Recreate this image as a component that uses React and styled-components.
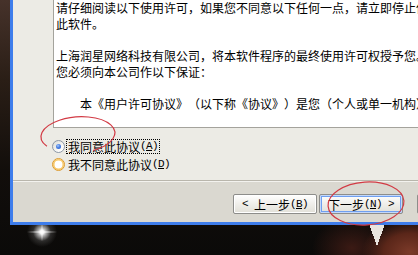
import React from "react";
import styled, { createGlobalStyle } from "styled-components";

const GlobalStyle = createGlobalStyle`
  html, body {
    margin: 0;
    padding: 0;
  }
  body {
    width: 418px;
    height: 255px;
    overflow: hidden;
    background: #0a0908;
  }
`;

const Scene = styled.div`
  position: relative;
  width: 418px;
  height: 255px;
  overflow: hidden;
  font-family: "Noto Sans CJK SC", "Noto Sans", sans-serif;
  text-spacing-trim: space-all;
  background:
    radial-gradient(ellipse 16px 1.5px at 42px 232px, rgba(255, 255, 255, 0.75), rgba(255, 255, 255, 0) 100%),
    radial-gradient(ellipse 1.5px 10px at 42px 232px, rgba(255, 255, 255, 0.7), rgba(255, 255, 255, 0) 100%),
    radial-gradient(circle at 42px 232px, #ffffff 0, #f2f2f2 2px, rgba(230, 230, 230, 0.75) 4px, rgba(140, 140, 140, 0.25) 9px, rgba(0, 0, 0, 0) 15px),
    conic-gradient(from -20deg at 377px 246px, #e9e4de 0 40deg, rgba(0, 0, 0, 0) 40deg),
    radial-gradient(ellipse 48px 34px at 410px 252px, #7b3a29 0, #5a2619 55%, rgba(40, 16, 12, 0) 100%),
    radial-gradient(ellipse 40px 30px at 352px 248px, #3b1a14 0, rgba(30, 14, 10, 0) 100%),
    linear-gradient(to bottom, #46322a 0, #2a1e16 80px, #120e0b 170px, #0b0a09 255px);
`;

const Window = styled.div`
  position: relative;
  z-index: 1;
  margin-left: 10px;
  width: 440px;
  height: 222px;
  border-left: 3px solid #3e7deb;
  border-bottom: 3px solid #3e7deb;
  display: flex;
  flex-direction: column;
`;

const Body = styled.div`
  height: 180px;
  background: #ecebe5;
  display: flex;
  flex-direction: column;
`;

const TextBox = styled.div`
  margin-left: 40px;
  width: 420px;
  height: 127px;
  box-sizing: content-box;
  padding: 14px 0 0 2px;
  margin-top: -14px;
  background: #ffffff;
  border-left: 1px solid #a4a39c;
  border-bottom: 1px solid #a4a39c;
  overflow: hidden;
`;

const TextLine = styled.div`
  height: 16px;
  line-height: 16px;
  font-size: 12px;
  color: #000;
  white-space: pre;
`;

const RadioGroup = styled.div`
  margin: 9px 0 0 39px;
  display: flex;
  flex-direction: column;
`;

const RadioRow = styled.div`
  height: 18px;
  display: flex;
  align-items: center;
`;

const RadioMark = styled.span`
  position: relative;
  box-sizing: border-box;
  width: 13px;
  height: 13px;
  border-radius: 50%;
  flex: none;
  border: 1px solid ${(p) => (p.$hover ? "#dc9a2c" : "#8c97a6")};
  background: ${(p) =>
    p.$hover ? "#ffffff" : "linear-gradient(135deg, #dcdcd4 0%, #ffffff 80%)"};
  box-shadow: ${(p) => (p.$hover ? "inset 0 0 0 1.5px #f8c866" : "none")};

  &::after {
    content: "";
    display: ${(p) => (p.$checked ? "block" : "none")};
    position: absolute;
    left: 3px;
    top: 3px;
    width: 5px;
    height: 5px;
    border-radius: 50%;
    background: radial-gradient(circle at 40% 35%, #a9c8fb 0, #4f86e6 40%, #2352c4 100%);
  }
`;

const RadioLabel = styled.span`
  margin-left: 1px;
  padding: 0 1px;
  height: 13px;
  line-height: 13px;
  font-size: 12px;
  color: #000;
  white-space: pre;
  border: 1px dotted ${(p) => (p.$focused ? "#000" : "transparent")};
  display: flex;
  align-items: center;
`;

const Ascii = styled.span`
  font-family: "Liberation Mono", monospace;
  font-size: 11px;
  letter-spacing: -0.6px;

  u {
    text-decoration: underline;
    text-underline-offset: 1px;
  }
`;

const Footer = styled.div`
  flex: 1;
  background: #dad8d0;
  border-top: 1px solid #b9b6ac;
  box-shadow: inset 0 1px 0 #f3f2ee;
  display: flex;
  align-items: flex-start;
  padding: 13px 0 0 220px;
  gap: 2px;
`;

const Button = styled.button`
  box-sizing: border-box;
  flex: none;
  width: 84px;
  height: 20px;
  margin-left: ${(p) => (p.$gap ? p.$gap : 0)}px;
  padding: 0;
  border: 1px solid #8d8d8a;
  border-radius: 2px;
  background: linear-gradient(#ffffff 0%, #f1f0ec 45%, #e2e0d8 100%);
  box-shadow: ${(p) =>
    p.$default ? "inset 0 0 0 1px #c3d8fa, inset 0 0 0 2px #6f9ff0" : "inset 0 0 0 1px #ffffff"};
  font-family: "Noto Sans CJK SC", sans-serif;
  font-size: 12px;
  color: #000;
  white-space: pre;
  display: flex;
  align-items: center;
  justify-content: center;
`;

const Marks = styled.svg`
  position: absolute;
  left: 0;
  top: 0;
  z-index: 2;
  pointer-events: none;
`;

const lines = [
  "请仔细阅读以下使用许可，如果您不同意以下任何一点，请立即停止使用",
  "此软件。",
  " ",
  "上海润星网络科技有限公司，将本软件程序的最终使用许可权授予您。",
  "您必须向本公司作以下保证：",
  " ",
  "　　本《用户许可协议》（以下称《协议》）是您（个人或单一机构）与上海润星网络科技有限公司",
];

export default function App() {
  return (
    <>
      <GlobalStyle />
      <Scene>
        <Window>
          <Body>
            <TextBox>
              {lines.map((line, i) => (
                <TextLine key={i}>{line}</TextLine>
              ))}
            </TextBox>
            <RadioGroup>
              <RadioRow>
                <RadioMark $checked />
                <RadioLabel $focused>
                  我同意此协议
                  <Ascii>
                    (<u>A</u>)
                  </Ascii>
                </RadioLabel>
              </RadioRow>
              <RadioRow>
                <RadioMark $hover />
                <RadioLabel>
                  我不同意此协议
                  <Ascii>
                    (<u>D</u>)
                  </Ascii>
                </RadioLabel>
              </RadioRow>
            </RadioGroup>
          </Body>
          <Footer>
            <Button>
              <Ascii>{"< "}</Ascii>
              上一步
              <Ascii>
                (<u>B</u>)
              </Ascii>
            </Button>
            <Button $default>
              下一步
              <Ascii>
                (<u>N</u>)
              </Ascii>
              <Ascii>{" >"}</Ascii>
            </Button>
            <Button $gap={12}>取消</Button>
          </Footer>
        </Window>
        <Marks width="418" height="255" viewBox="0 0 418 255">
          <path
            d="M46.9,146.3 A37,18 -4 1 1 93,150.5"
            fill="none"
            stroke="#d23a44"
            strokeWidth="1.2"
          />
          <ellipse
            cx="366"
            cy="203.5"
            rx="38"
            ry="21.5"
            transform="rotate(-4 366 203.5)"
            fill="none"
            stroke="#d23a44"
            strokeWidth="1.2"
          />
        </Marks>
      </Scene>
    </>
  );
}
